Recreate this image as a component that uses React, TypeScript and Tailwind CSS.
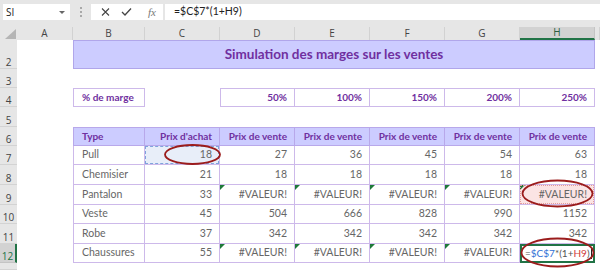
import React from "react";

const BORDER = "border-[#cdb9ea]";

function RowHead({ n, active }: { n: string; active?: boolean }) {
  return (
    <div
      className={
        active
          ? "flex items-end justify-center bg-[#d2d2d2] border-b border-b-[#c4c4c4] border-r-2 border-r-[#217346] text-[10px] leading-none text-[#217346] font-['Open_Sans',sans-serif] pb-[1px]"
          : "flex items-end justify-center bg-[#e6e6e6] border-b border-b-[#d3d3d3] text-[10px] leading-none text-[#444] font-['Open_Sans',sans-serif] pb-[1px]"
      }
    >
      {n}
    </div>
  );
}

function ColHead({ l }: { l: string }) {
  const active = l === "H";
  return (
    <div
      className={
        active
          ? "flex items-center justify-center bg-[#d2d2d2] border-b-2 border-b-[#217346] border-r border-r-[#c4c4c4] text-[10px] text-[#2d5e40] font-['Open_Sans',sans-serif]"
          : "flex items-center justify-center bg-[#e6e6e6] border-r border-r-[#d2d2d2] text-[10px] text-[#444] font-['Open_Sans',sans-serif]"
      }
    >
      {l}
    </div>
  );
}

function Tri() {
  return (
    <span className="absolute left-0 top-0 w-0 h-0 border-t-[5px] border-t-[#1f7a3a] border-r-[5px] border-r-transparent" />
  );
}

function Cell({
  v,
  first,
  tri,
  children,
  extra,
}: {
  v?: string;
  first?: boolean;
  tri?: boolean;
  children?: React.ReactNode;
  extra?: string;
}) {
  return (
    <div
      className={
        "relative flex items-center border-r border-b " +
        BORDER +
        " text-[10.5px] text-[#666] " +
        (first ? "border-l pl-[8px] justify-start " : "justify-end pr-[7px] ") +
        (extra ?? "")
      }
    >
      {tri && <Tri />}
      {children}
      {v && <span className="relative">{v}</span>}
    </div>
  );
}

const rows: { t: string; a: string; v: string[] }[] = [
  { t: "Pull", a: "18", v: ["27", "36", "45", "54", "63"] },
  { t: "Chemisier", a: "21", v: ["18", "18", "18", "18", "18"] },
  { t: "Pantalon", a: "33", v: ["#VALEUR!", "#VALEUR!", "#VALEUR!", "#VALEUR!", "#VALEUR!"] },
  { t: "Veste", a: "45", v: ["504", "666", "828", "990", "1152"] },
  { t: "Robe", a: "37", v: ["342", "342", "342", "342", "342"] },
  { t: "Chaussures", a: "55", v: ["#VALEUR!", "#VALEUR!", "#VALEUR!", "#VALEUR!", "F"] },
];

export default function App() {
  return (
    <div className="relative w-[600px] h-[270px] overflow-hidden bg-white font-['Lato',sans-serif]">
      {/* formula bar */}
      <div className="h-[27px] bg-[#e6e6e6] flex items-start pt-[4px] pl-[3px]">
        <div className="w-[67px] h-[16px] bg-white flex items-center justify-between pl-[3px] pr-[5px] text-[10px] text-[#222] font-['Open_Sans',sans-serif]">
          <span>SI</span>
          <span className="w-0 h-0 border-l-[3px] border-l-transparent border-r-[3px] border-r-transparent border-t-[3px] border-t-[#666]" />
        </div>
        <div className="w-[21px] h-[16px] flex flex-col items-center justify-center gap-[2px]">
          <span className="w-[2px] h-[2px] bg-[#a8a8a8]" />
          <span className="w-[2px] h-[2px] bg-[#a8a8a8]" />
          <span className="w-[2px] h-[2px] bg-[#a8a8a8]" />
        </div>
        <div className="w-[72px] h-[16px] bg-white flex items-center">
          <svg width="72" height="16" viewBox="0 0 72 16">
            <path d="M11 4.5 L18 11.5 M18 4.5 L11 11.5" stroke="#444" strokeWidth="1.1" fill="none" />
            <path d="M31 8 L34 11 L40 4.5" stroke="#444" strokeWidth="1.3" fill="none" />
          </svg>
        </div>
        <div className="-ml-[22px] w-[22px] h-[16px] flex items-center justify-center text-[11px] italic text-[#777] font-['Liberation_Serif',serif]">
          fx
        </div>
        <div className="ml-[2px] flex-1 h-[16px] bg-white flex items-center pl-[9px] text-[10.5px] text-[#222] font-['Lato',sans-serif]">
          =$C$7*(1+H9)
        </div>
      </div>

      {/* sheet */}
      <div className="grid grid-cols-[17px_56px_72px_75px_75px_75px_75px_75px_75px_5px] grid-rows-[13px_29px_19px_19px_20px_19px_19px_20px_20px_19px_20px_19px_7px]">
        {/* header row */}
        <div className="bg-[#e6e6e6] flex items-end justify-end pr-[1px] pb-[1px]">
          <svg width="11" height="10" viewBox="0 0 11 10">
            <path d="M11 0 L11 10 L0 10 Z" fill="#b5b5b5" />
          </svg>
        </div>
        {["A", "B", "C", "D", "E", "F", "G", "H", ""].map((l, i) => (
          <ColHead key={i} l={l} />
        ))}

        {/* row 2 */}
        <RowHead n="2" />
        <div />
        <div className="col-span-7 flex items-center justify-center bg-[#ccccff] border border-[#b0a6ea] text-[13.5px] font-bold text-[#7030a0]">
          Simulation des marges sur les ventes
        </div>
        <div />

        {/* row 3 */}
        <RowHead n="3" />
        <div className="col-span-9" />

        {/* row 4 */}
        <RowHead n="4" />
        <div />
        <div className={"flex items-center pl-[8px] border " + BORDER + " text-[10px] font-bold text-[#7030a0]"}>
          % de marge
        </div>
        <div />
        {["50%", "100%", "150%", "200%", "250%"].map((p, i) => (
          <div
            key={p}
            className={
              "flex items-center justify-end pr-[7px] border-t border-b border-r " +
              BORDER +
              (i === 0 ? " border-l" : "") +
              " text-[10px] font-bold text-[#7030a0]"
            }
          >
            {p}
          </div>
        ))}
        <div />

        {/* row 5 */}
        <RowHead n="5" />
        <div className="col-span-9" />

        {/* row 6 */}
        <RowHead n="6" />
        <div />
        {["Type", "Prix d'achat", "Prix de vente", "Prix de vente", "Prix de vente", "Prix de vente", "Prix de vente"].map(
          (h, i) => (
            <div
              key={i}
              className={
                "flex items-center bg-[#ccccff] border-t border-b border-r border-[#b8a8ea] text-[10px] font-bold text-[#7030a0] " +
                (i === 0 ? "border-l justify-start pl-[8px]" : "justify-end pr-[7px]")
              }
            >
              {h}
            </div>
          )
        )}
        <div />

        {/* data rows */}
        {rows.map((r, ri) => {
          const rowNum = ri + 7;
          const isErr = r.v[0] === "#VALEUR!";
          return (
            <React.Fragment key={r.t}>
              <RowHead n={String(rowNum)} active={rowNum === 12} />
              <div />
              <Cell v={r.t} first />
              {rowNum === 7 ? (
                <Cell extra="bg-[#e8eef9]">
                  <span className="absolute inset-0 border border-dashed border-[#7fa3dc]" />
                  <span className="relative">{r.a}</span>
                </Cell>
              ) : (
                <Cell v={r.a} />
              )}
              {r.v.map((x, ci) => {
                if (rowNum === 9 && ci === 4) {
                  return (
                    <Cell key={ci} tri extra="bg-[#fbe4e4]">
                      <span className="absolute inset-0 border border-dotted border-[#e59a9a]" />
                      <span className="relative">{x}</span>
                    </Cell>
                  );
                }
                if (x === "F") {
                  return (
                    <div
                      key={ci}
                      className="relative flex items-center justify-start pl-[3px] border-2 border-[#217346] bg-white text-[10px] text-[#555] overflow-hidden"
                    >
                      <span className="whitespace-nowrap">
                        =<span className="text-[#2f6fd6]">$C$7</span>*(1+<span className="text-[#d03a3a]">H9</span>)
                      </span>
                      <span className="ml-[1px] shrink-0 w-px h-[11px] bg-[#222]" />
                    </div>
                  );
                }
                return <Cell key={ci} v={x} tri={isErr} />;
              })}
              <div />
            </React.Fragment>
          );
        })}

        {/* row 13 */}
        <RowHead n="" />
        <div className="col-span-9" />
      </div>

      {/* annotation ellipses */}
      <svg className="absolute left-0 top-0 pointer-events-none" width="600" height="270" viewBox="0 0 600 270">
        <ellipse cx="192.5" cy="154.5" rx="27.5" ry="9.5" fill="none" stroke="#9b1c1c" strokeWidth="1.8" />
        <ellipse cx="557.5" cy="193.5" rx="35" ry="13" fill="none" stroke="#9b1c1c" strokeWidth="1.8" />
        <ellipse cx="557.5" cy="252.5" rx="36" ry="14" fill="none" stroke="#9b1c1c" strokeWidth="1.8" />
      </svg>
    </div>
  );
}
